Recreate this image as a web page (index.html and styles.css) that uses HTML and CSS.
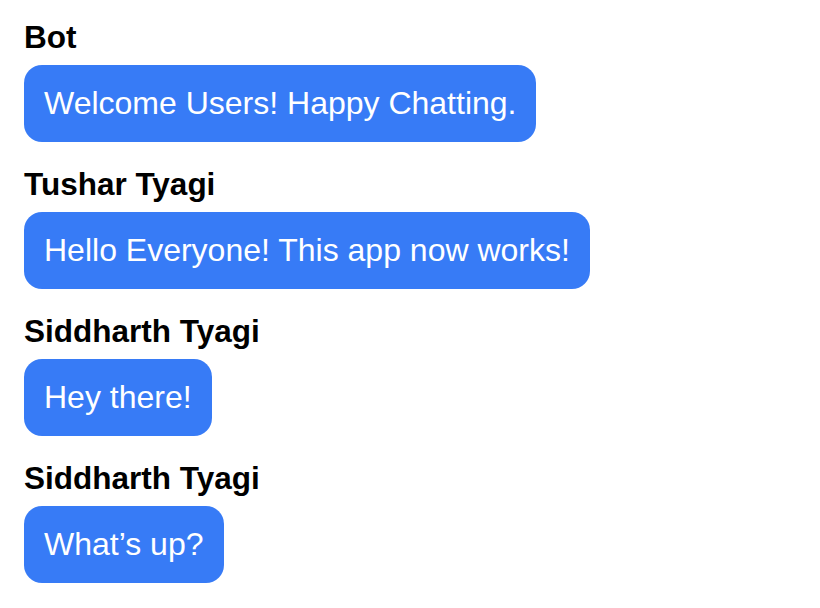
FILE: index.html
```html
<!DOCTYPE html>
<html>
<head>
<meta charset="utf-8">
<link rel="stylesheet" href="styles.css">
</head>
<body>
<div class="chat">
  <div class="message">
    <div class="name">Bot</div>
    <div class="bubble">Welcome Users! Happy Chatting.</div>
  </div>
  <div class="message">
    <div class="name">Tushar Tyagi</div>
    <div class="bubble">Hello Everyone! This app now works!</div>
  </div>
  <div class="message">
    <div class="name">Siddharth Tyagi</div>
    <div class="bubble">Hey there!</div>
  </div>
  <div class="message">
    <div class="name">Siddharth Tyagi</div>
    <div class="bubble">What’s up?</div>
  </div>
</div>
</body>
</html>
```
FILE: styles.css
```css
html, body {
  margin: 0;
  padding: 0;
  background: #ffffff;
  font-family: "Liberation Sans", Arial, Helvetica, sans-serif;
}
.chat {
  display: flex;
  flex-direction: column;
  align-items: flex-start;
  gap: 25px;
  padding: 20px 24px;
}
.message {
  display: flex;
  flex-direction: column;
  align-items: flex-start;
}
.name {
  font-size: 31.5px;
  font-weight: bold;
  color: #000;
  line-height: 34px;
  margin-bottom: 11px;
}
.bubble {
  background: #377bf6;
  color: #fff;
  font-size: 32px;
  line-height: 37px;
  padding: 20px 20px;
  border-radius: 18px;
}
```
